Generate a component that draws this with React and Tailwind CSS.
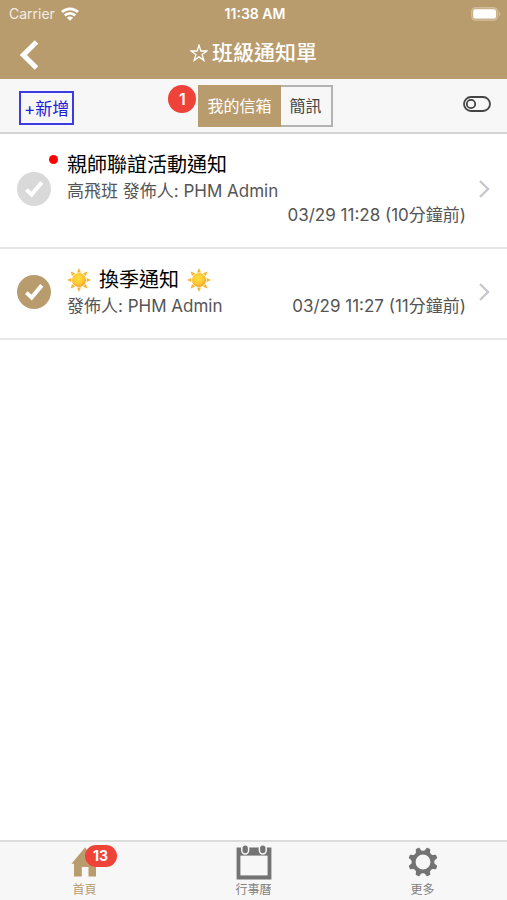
import { useState } from "react";

const MESSAGES = [
  {
    id: 1,
    title: "親師聯誼活動通知",
    sunny: false,
    from: "高飛班 發佈人: PHM Admin",
    time: "03/29 11:28 (10分鐘前)",
    read: false,
  },
  {
    id: 2,
    title: "換季通知",
    sunny: true,
    from: "發佈人: PHM Admin",
    time: "03/29 11:27 (11分鐘前)",
    read: true,
  },
];

function WifiIcon() {
  return (
    <svg viewBox="0 0 18 14" className="h-[14px] w-[18px] text-white" fill="none" stroke="currentColor" strokeWidth="2.8">
      <path d="M1 5.1C5.6.7 12.4.7 17 5.1" />
      <path d="M3.8 8.6c2.9-2.9 7.5-2.9 10.4 0" />
      <path d="M9 13.8 5.9 10.7c1.7-1.5 4.5-1.5 6.2 0z" fill="currentColor" stroke="none" />
    </svg>
  );
}

function BatteryIcon() {
  return (
    <svg viewBox="0 0 30 14" className="h-[14px] w-[30px]">
      <rect x="0.6" y="0.6" width="26" height="12.6" rx="3.6" fill="#c8b189" stroke="#d3bf9f" strokeWidth="1" />
      <rect x="2.2" y="2.2" width="22.8" height="9.4" rx="2.2" fill="#fff" />
      <path d="M27.8 4.8v4.4q1.6-.6 1.6-2.2t-1.6-2.2z" fill="#d3bf9f" />
    </svg>
  );
}

function StarIcon() {
  return (
    <svg viewBox="0 0 18 18" className="h-[18px] w-[18px]" fill="none" stroke="currentColor" strokeWidth="1.3">
      <path d="M9 1.2 10.9 7H17l-4.9 3.6 1.8 5.8L9 12.9l-4.9 3.5 1.8-5.8L1 7h6.1z" />
    </svg>
  );
}

function SunIcon() {
  return (
    <svg viewBox="0 0 24 24" className="h-6 w-6">
      <defs>
        <radialGradient id="sun" cx="45%" cy="40%" r="62%">
          <stop offset="0" stopColor="#ffe03e" />
          <stop offset="0.6" stopColor="#ffc833" />
          <stop offset="1" stopColor="#f5a02a" />
        </radialGradient>
      </defs>
      {[0, 45, 90, 135, 180, 225, 270, 315].map((deg) => (
        <path key={deg} d="M12 0 14 4.4H10z" fill="#f5b62c" transform={`rotate(${deg} 12 12)`} />
      ))}
      <circle cx="12" cy="12" r="7" fill="url(#sun)" />
    </svg>
  );
}

function CheckCircle({ active }) {
  return (
    <svg viewBox="0 0 34 34" className="h-[34px] w-[34px]">
      <circle cx="17" cy="17" r="17" fill={active ? "#b99c6e" : "#d9d9d9"} />
      <path d="m9.4 17.6 5.2 5L24.8 10.4" fill="none" stroke="#fff" strokeWidth="4" />
    </svg>
  );
}

function HomeIcon() {
  return (
    <svg viewBox="0 0 28 30" className="h-[30px] w-7" fill="currentColor">
      <path d="M14 .5 27.5 16.8H25V29.5h-7.5V20h-6.7v9.5H3V16.8H.5z" />
    </svg>
  );
}

function CalendarIcon() {
  return (
    <svg viewBox="0 0 36 36" className="h-9 w-9">
      <path d="M.6 3.4h34.8v32H.6z" fill="#737373" />
      <path d="M4.4 11.6h27.2v19.8H4.4z" fill="#f7f7f7" />
      <rect x="5.8" y=".8" width="6.8" height="9.2" rx="3.4" fill="#737373" stroke="#f7f7f7" strokeWidth="1.5" />
      <rect x="23.4" y=".8" width="6.8" height="9.2" rx="3.4" fill="#737373" stroke="#f7f7f7" strokeWidth="1.5" />
    </svg>
  );
}

function GearIcon() {
  return (
    <svg viewBox="0 0 30 30" className="h-[30px] w-[30px]">
      {[22.5, 67.5, 112.5, 157.5, 202.5, 247.5, 292.5, 337.5].map((deg) => (
        <path
          key={deg}
          d="M10.4 5C12.2 4.6 12.5 2.9 12.7 1.6q.2-1.4 1.4-1.4h1.8q1.2 0 1.4 1.4c.2 1.3.5 3 2.3 3.4L18 7h-6z"
          fill="#737373"
          transform={`rotate(${deg} 15 15)`}
        />
      ))}
      <circle cx="15" cy="15" r="9.4" fill="none" stroke="#737373" strokeWidth="3.9" />
    </svg>
  );
}

function ToggleIcon() {
  return (
    <svg viewBox="0 0 28 16" className="h-4 w-7" fill="none" stroke="#444" strokeWidth="1.8">
      <rect x="1" y="1" width="26" height="14" rx="7" />
      <circle cx="8" cy="8" r="4.2" />
    </svg>
  );
}

function MessageRow({ message }) {
  return (
    <li className="border-b-2 border-[#e8e8e8]">
      <a href={`#message-${message.id}`} className="flex items-center px-[17px] pt-[17px] pb-5">
        <span className="relative shrink-0">
          <CheckCircle active={message.read} />
          {!message.read && (
            <span className="absolute -top-[17px] left-8 h-[9px] w-[9px] rounded-full bg-[#f00]" />
          )}
        </span>
        <div className="ml-4 min-w-0 flex-1">
          <h2 className="flex items-center gap-2 text-[20px] leading-7 text-black">
            {message.sunny && <SunIcon />}
            {message.title}
            {message.sunny && <SunIcon />}
          </h2>
          <div className="flex flex-wrap justify-between text-[17px] leading-6 text-[#555]">
            <span className="pr-9">{message.from}</span>
            <span className="ml-auto">{message.time}</span>
          </div>
        </div>
        <svg viewBox="0 0 12 18" className="ml-3 h-[18px] w-3 shrink-0" fill="none" stroke="#c7c7cc" strokeWidth="2.4">
          <path d="m2 1 8 8-8 8" />
        </svg>
      </a>
    </li>
  );
}

export default function App() {
  const [tab, setTab] = useState("inbox");

  return (
    <div className="flex min-h-screen flex-col bg-white font-['Inter','Noto_Sans_CJK_TC',sans-serif]">
      <header className="bg-[#b99c6e] text-white">
        <div className="grid h-[27px] grid-cols-[1fr_auto_1fr] items-center pr-[6px] pl-[9px] text-[14px]">
          <div className="flex items-center gap-[6px]">
            <span className="text-[#f3ede3]">Carrier</span>
            <WifiIcon />
          </div>
          <span className="font-semibold">11:38 AM</span>
          <div className="flex justify-end">
            <BatteryIcon />
          </div>
        </div>
        <div className="grid h-[52px] grid-cols-[1fr_auto_1fr] items-center px-5">
          <button type="button" aria-label="返回" className="justify-self-start pt-1">
            <svg viewBox="0 0 20 30" className="h-[30px] w-5" fill="none" stroke="currentColor" strokeWidth="5">
              <path d="M16.5 2 3.4 15l13.1 13" />
            </svg>
          </button>
          <h1 className="flex items-center gap-1 text-[21px] font-medium">
            <StarIcon />
            班級通知單
          </h1>
        </div>
      </header>

      <div className="grid grid-cols-[1fr_auto_1fr] items-center border-b-2 border-[#d4d4d4] bg-[#f7f7f7] px-4 pt-[6px] pb-[5px]">
        <button
          type="button"
          className="mt-[3px] ml-[3px] h-[34px] justify-self-start border-2 border-[#3b3be0] px-[3px] pt-[2px] text-[17px] leading-7 text-[#2020d8]"
        >
          +新增
        </button>
        <div className="relative flex pl-6 text-[16px]">
          <button
            type="button"
            onClick={() => setTab("inbox")}
            className={
              "h-[42px] border-2 px-[7px] " +
              (tab === "inbox" ? "border-[#b99c6e] bg-[#b99c6e] text-white" : "border-[#b3b3b3] text-[#444]")
            }
          >
            我的信箱
          </button>
          <button
            type="button"
            onClick={() => setTab("sms")}
            className={
              "h-[42px] border-2 border-l-0 border-[#b3b3b3] px-[9px] " +
              (tab === "sms" ? "bg-[#b99c6e] text-white" : "text-[#444]")
            }
          >
            簡訊
          </button>
          <span className="absolute top-0 -left-[6px] flex h-7 w-7 items-center justify-center rounded-full bg-[#ef4238] text-[16px] font-semibold text-white">
            1
          </span>
        </div>
        <button type="button" aria-label="切換顯示" className="justify-self-end pb-1">
          <ToggleIcon />
        </button>
      </div>

      <main className="flex-1">
        <ul>
          {MESSAGES.map((message) => (
            <MessageRow key={message.id} message={message} />
          ))}
        </ul>
      </main>

      <nav className="grid h-[60px] grid-cols-3 border-t-2 border-[#dcdcdc] bg-[#f7f7f7] text-[12px] leading-4 text-[#808080]">
        <a href="#home" className="flex flex-col items-center text-[#b99c6e]">
          <span className="relative flex h-10 items-center">
            <HomeIcon />
            <span className="absolute top-[3px] left-[14px] flex h-[22px] w-8 items-center justify-center rounded-full bg-[#ef4238] text-[14px] font-bold text-white">
              13
            </span>
          </span>
          首頁
        </a>
        <a href="#calendar" className="flex flex-col items-center">
          <span className="flex h-10 items-center">
            <CalendarIcon />
          </span>
          行事曆
        </a>
        <a href="#more" className="flex flex-col items-center">
          <span className="flex h-10 items-center">
            <GearIcon />
          </span>
          更多
        </a>
      </nav>
    </div>
  );
}
